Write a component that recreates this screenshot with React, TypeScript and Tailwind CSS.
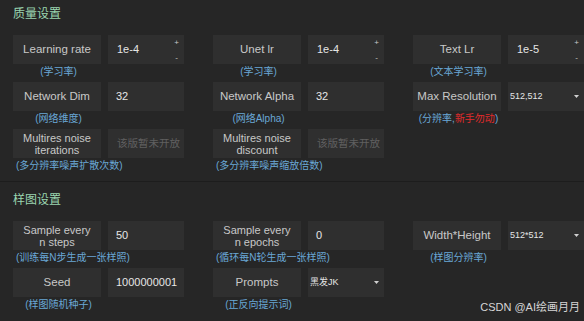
type Field = {
  label: string;
  multi?: boolean;
  value?: string;
  kind?: "spin" | "text" | "select" | "disabled";
  caption?: string;
  warn?: string;
};

const quality: (Field | null)[] = [
  { label: "Learning rate", value: "1e-4", kind: "spin", caption: "(学习率)" },
  { label: "Unet lr", value: "1e-4", kind: "spin", caption: "(学习率)" },
  { label: "Text Lr", value: "1e-5", kind: "spin", caption: "(文本学习率)" },
  { label: "Network Dim", value: "32", kind: "text", caption: "(网络维度)" },
  { label: "Network Alpha", value: "32", kind: "text", caption: "(网络Alpha)" },
  { label: "Max Resolution", value: "512,512", kind: "select", caption: "(分辨率,", warn: "新手勿动" },
  { label: "Multires noise iterations", multi: true, kind: "disabled", caption: "(多分辨率噪声扩散次数)" },
  { label: "Multires noise discount", multi: true, kind: "disabled", caption: "(多分辨率噪声缩放倍数)" },
  null,
];

const sample: (Field | null)[] = [
  { label: "Sample every n steps", multi: true, value: "50", kind: "text", caption: "(训练每N步生成一张样照)" },
  { label: "Sample every n epochs", multi: true, value: "0", kind: "text", caption: "(循环每N轮生成一张样照)" },
  { label: "Width*Height", value: "512*512", kind: "select", caption: "(样图分辨率)" },
  { label: "Seed", value: "1000000001", kind: "text", caption: "(样图随机种子)" },
  { label: "Prompts", value: "黑发JK", kind: "select", caption: "(正反向提示词)" },
  null,
];

function Caret() {
  return (
    <svg width="5" height="3" viewBox="0 0 5 3">
      <polygon points="0,0 5,0 2.5,3" fill="#d0d0d0" />
    </svg>
  );
}

function Input({ f }: { f: Field }) {
  if (f.kind === "spin") {
    return (
      <div className="w-[76px] h-[29px] bg-[#2f2f2f] flex items-center justify-between pl-[9px] pr-[5px]">
        <span className="text-[11px] text-[#e6e6e6]">{f.value}</span>
        <div className="flex flex-col items-center text-[8px] leading-[9px] text-[#c8c8c8] gap-[6px]">
          <span>+</span>
          <span>-</span>
        </div>
      </div>
    );
  }
  if (f.kind === "select") {
    return (
      <div className="w-[76px] h-[29px] bg-[#2f2f2f] flex items-center justify-between pl-[2px] pr-[5px]">
        <span className="text-[9px] text-[#e6e6e6]">{f.value}</span>
        <Caret />
      </div>
    );
  }
  if (f.kind === "disabled") {
    return (
      <div className="w-[76px] h-[29px] bg-[#2f2f2f] flex items-center pl-[9px]">
        <span className="text-[10.5px] text-[#606060] whitespace-nowrap">该版暂未开放</span>
      </div>
    );
  }
  return (
    <div className="w-[76px] h-[29px] bg-[#2f2f2f] flex items-center pl-[8px]">
      <span className="text-[11px] text-[#e6e6e6]">{f.value}</span>
    </div>
  );
}

function Cell({ f }: { f: Field | null }) {
  if (!f) return <div className="h-[47px]" />;
  return (
    <div className="flex flex-col h-[47px]">
      <div className="flex gap-[7px]">
        <div
          className={`w-[88px] h-[29px] bg-[#2f2f2f] flex items-center justify-center text-center text-[#c8c8c8] ${
            f.multi ? "text-[11px] leading-[12px] px-[8px]" : "text-[11.5px] whitespace-nowrap"
          }`}
        >
          {f.label}
        </div>
        <Input f={f} />
      </div>
      <div className="w-[88px] pl-[3px] h-[18px] leading-[16px] text-center whitespace-nowrap text-[10px] text-[#6aa8d6]">
        {f.caption}
        {f.warn && (
          <>
            <span className="text-[#e02b2b]">{f.warn}</span>)
          </>
        )}
      </div>
    </div>
  );
}

function Section({ title, items }: { title: string; items: (Field | null)[] }) {
  return (
    <div>
      <div className="pl-[13px] h-[18px] leading-[18px] text-[12px] text-[#9bd6b0]">{title}</div>
      <div className="mt-[12px] pl-[13px] grid grid-cols-[200px_200px_200px]">
        {items.map((f, i) => (
          <Cell key={i} f={f} />
        ))}
      </div>
    </div>
  );
}

export default function App() {
  return (
    <div
      className="relative w-[584px] h-[321px] bg-[#262626] overflow-hidden"
      style={{ fontFamily: '"Liberation Sans", "Noto Sans CJK SC", sans-serif' }}
    >
      <div className="pt-[5px]">
        <Section title="质量设置" items={quality} />
      </div>
      <div className="mt-[5px] border-t border-[#1d1d1d] pt-[9px]">
        <Section title="样图设置" items={sample} />
      </div>
      <div className="absolute right-[4px] bottom-[6px] text-[11px] text-[#d6d6d6] whitespace-nowrap">
        CSDN @AI绘画月月
      </div>
    </div>
  );
}
